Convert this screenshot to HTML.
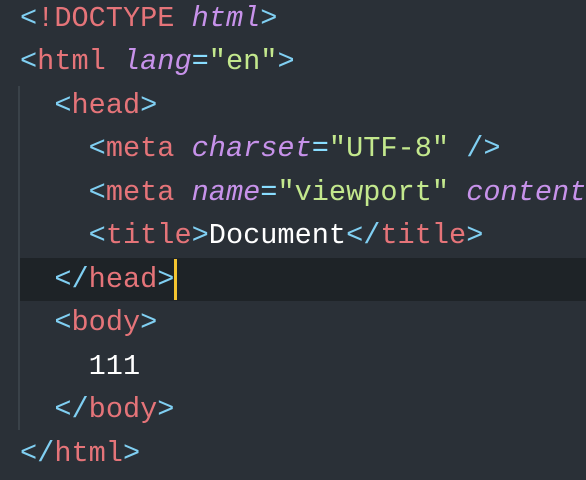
<!DOCTYPE html>
<html><head><style>
body{margin:0;width:586px;height:480px;background:#2a3037;overflow:hidden;position:relative;font-family:"Liberation Mono",monospace;font-size:28.6px}
.l{position:absolute;left:20px;height:43.5px;line-height:43.5px;white-space:pre;color:#fff}
.p{color:#80cff2}.t{color:#e57479}.a{color:#c792ea;font-style:italic}.s{color:#c3e88d}.o{color:#89ddff}
.hl{position:absolute;left:20px;right:0;top:258px;height:43px;background:#1e2327}
.g{position:absolute;left:18px;top:86px;width:2px;height:344px;background:#3a4249}
.c{position:absolute;left:174px;top:259px;width:3px;height:41px;background:#f4c430}
</style></head><body>
<div class="hl"></div><div class="g"></div>
<div class="l" style="top:-3px"><span class="p">&lt;</span><span class="t">!DOCTYPE</span> <span class="a">html</span><span class="p">&gt;</span></div>
<div class="l" style="top:40px"><span class="p">&lt;</span><span class="t">html</span> <span class="a">lang</span><span class="o">=</span><span class="s">"en"</span><span class="p">&gt;</span></div>
<div class="l" style="top:84px">  <span class="p">&lt;</span><span class="t">head</span><span class="p">&gt;</span></div>
<div class="l" style="top:127px">    <span class="p">&lt;</span><span class="t">meta</span> <span class="a">charset</span><span class="o">=</span><span class="s">"UTF-8"</span> <span class="p">/&gt;</span></div>
<div class="l" style="top:171px">    <span class="p">&lt;</span><span class="t">meta</span> <span class="a">name</span><span class="o">=</span><span class="s">"viewport"</span> <span class="a">content</span></div>
<div class="l" style="top:214px">    <span class="p">&lt;</span><span class="t">title</span><span class="p">&gt;</span>Document<span class="p">&lt;/</span><span class="t">title</span><span class="p">&gt;</span></div>
<div class="l" style="top:258px">  <span class="p">&lt;/</span><span class="t">head</span><span class="p">&gt;</span></div>
<div class="l" style="top:301px">  <span class="p">&lt;</span><span class="t">body</span><span class="p">&gt;</span></div>
<div class="l" style="top:345px">    111</div>
<div class="l" style="top:388px">  <span class="p">&lt;/</span><span class="t">body</span><span class="p">&gt;</span></div>
<div class="l" style="top:432px"><span class="p">&lt;/</span><span class="t">html</span><span class="p">&gt;</span></div>
<div class="c"></div>
</body></html>
